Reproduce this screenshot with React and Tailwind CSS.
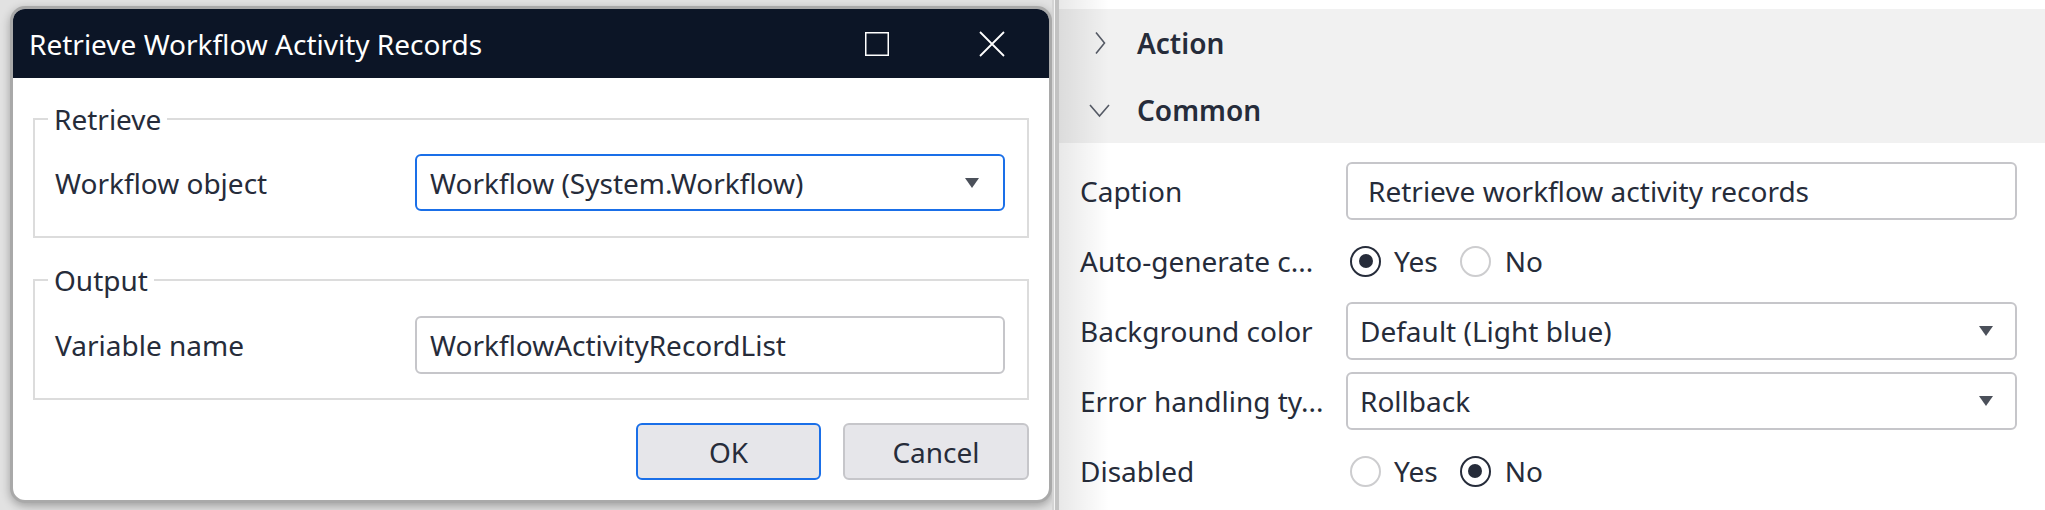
import React from "react";

function Triangle() {
  return (
    <svg width="14" height="10" viewBox="0 0 14 10" className="shrink-0">
      <polygon points="0,0 14,0 7,10" fill="#4b505a" />
    </svg>
  );
}

function Radio({ checked }) {
  return checked ? (
    <span className="w-[31px] h-[31px] rounded-full border-2 border-[#262c3a] flex items-center justify-center shrink-0">
      <span className="w-[14px] h-[14px] rounded-full bg-[#262c3a]" />
    </span>
  ) : (
    <span className="w-[31px] h-[31px] rounded-full border-2 border-[#cdcdcf] shrink-0" />
  );
}

function RadioPair({ yes }) {
  return (
    <div className="flex items-center pl-[4px]">
      <Radio checked={yes} />
      <span className="ml-[13px]">Yes</span>
      <span className="ml-[22px] flex items-center">
        <Radio checked={!yes} />
        <span className="ml-[14px]">No</span>
      </span>
    </div>
  );
}

function Dialog() {
  return (
    <div className="w-[1042px] h-[497px] border-[3px] border-[#a9a9a9] rounded-[15px] overflow-hidden bg-white flex flex-col shadow-[0_3px_10px_rgba(0,0,0,0.3)]">
      <div className="h-[69px] shrink-0 bg-[#0c1526] flex items-center pl-[16px] pr-[44px] text-white">
        <span className="flex-1">Retrieve Workflow Activity Records</span>
        <svg width="24" height="24" viewBox="0 0 24 24" className="shrink-0">
          <rect x="0.75" y="0.75" width="22.5" height="22.5" fill="none" stroke="#ffffff" strokeWidth="1.5" />
        </svg>
        <svg width="26" height="26" viewBox="0 0 26 26" className="ml-[90px] shrink-0">
          <path d="M1 1 L25 25 M25 1 L1 25" stroke="#ffffff" strokeWidth="1.8" fill="none" />
        </svg>
      </div>
      <div className="flex-1 flex flex-col px-[20px] pt-[22px] pb-[20px]">
        <fieldset className="border-2 border-[#dcdcdc]">
          <legend className="ml-[13px] px-[6px] leading-[38px]">Retrieve</legend>
          <div className="flex items-center pl-[20px] pr-[22px] pt-[16px] pb-[25px]">
            <span className="w-[360px] shrink-0">Workflow object</span>
            <div className="flex-1 h-[57px] border-2 border-[#1a6fe8] rounded-[6px] flex items-center pl-[13px] pr-[24px]">
              <span className="flex-1">Workflow (System.Workflow)</span>
              <Triangle />
            </div>
          </div>
        </fieldset>
        <fieldset className="border-2 border-[#dcdcdc] mt-[23px]">
          <legend className="ml-[13px] px-[6px] leading-[38px]">Output</legend>
          <div className="flex items-center pl-[20px] pr-[22px] pt-[17px] pb-[24px]">
            <span className="w-[360px] shrink-0">Variable name</span>
            <div className="flex-1 h-[58px] border-2 border-[#c6c6ca] rounded-[6px] flex items-center pl-[13px]">
              <span>WorkflowActivityRecordList</span>
            </div>
          </div>
        </fieldset>
        <div className="flex justify-end gap-[22px] mt-[23px]">
          <button className="w-[185px] h-[57px] bg-[#e6e6ea] border-2 border-[#1a6fe8] rounded-[6px] flex items-center justify-center">
            OK
          </button>
          <button className="w-[186px] h-[57px] bg-[#e6e6ea] border-2 border-[#c6c6ca] rounded-[6px] flex items-center justify-center">
            Cancel
          </button>
        </div>
      </div>
    </div>
  );
}

function Panel() {
  return (
    <div className="relative flex-1 h-full bg-white pt-[9px] flex flex-col">
      <div className="bg-[#f1f1f1] flex flex-col">
        <div className="h-[67px] flex items-center pl-[30px]">
          <svg width="24" height="24" viewBox="0 0 24 24" className="mr-[24px] shrink-0">
            <path d="M7 1.5 L15.5 12 L7 22.5" stroke="#565b66" strokeWidth="1.6" fill="none" />
          </svg>
          <span className="font-semibold">Action</span>
        </div>
        <div className="h-[67px] flex items-center pl-[30px]">
          <svg width="24" height="24" viewBox="0 0 24 24" className="mr-[24px] shrink-0">
            <path d="M1 7 L10.5 18 L20 7" stroke="#565b66" strokeWidth="1.6" fill="none" />
          </svg>
          <span className="font-semibold">Common</span>
        </div>
      </div>
      <div className="flex flex-col gap-[12px] pt-[19px] pl-[21px] pr-[28px]">
        <div className="h-[58px] flex items-center">
          <span className="w-[266px] shrink-0">Caption</span>
          <div className="flex-1 h-[58px] border-2 border-[#c6c6ca] rounded-[6px] flex items-center pl-[20px]">
            Retrieve workflow activity records
          </div>
        </div>
        <div className="h-[58px] flex items-center">
          <span className="w-[266px] shrink-0">Auto-generate c...</span>
          <RadioPair yes={true} />
        </div>
        <div className="h-[58px] flex items-center">
          <span className="w-[266px] shrink-0">Background color</span>
          <div className="flex-1 h-[58px] border-2 border-[#c6c6ca] rounded-[6px] flex items-center pl-[12px] pr-[22px]">
            <span className="flex-1">Default (Light blue)</span>
            <Triangle />
          </div>
        </div>
        <div className="h-[58px] flex items-center">
          <span className="w-[266px] shrink-0">Error handling ty...</span>
          <div className="flex-1 h-[58px] border-2 border-[#c6c6ca] rounded-[6px] flex items-center pl-[12px] pr-[22px]">
            <span className="flex-1">Rollback</span>
            <Triangle />
          </div>
        </div>
        <div className="h-[58px] flex items-center">
          <span className="w-[266px] shrink-0">Disabled</span>
          <RadioPair yes={false} />
        </div>
      </div>
      <div className="absolute left-0 top-0 bottom-0 w-[50px] pointer-events-none bg-[linear-gradient(to_right,rgba(0,0,0,0.09),rgba(0,0,0,0))]" />
    </div>
  );
}

export default function App() {
  return (
    <div className="flex w-[2045px] h-[510px] overflow-hidden font-['Noto_Sans','Open_Sans',sans-serif] text-[28px] text-[#262c3a]">
      <div className="w-[1052px] h-full shrink-0 bg-[#e2e2e2] pl-[10px] pt-[6px]">
        <Dialog />
      </div>
      <div className="flex shrink-0 h-full">
        <div className="w-[2px] bg-[#d4d4d4]" />
        <div className="w-[1px] bg-[#f4f4f4]" />
        <div className="w-[4px] bg-[#c2c2c2]" />
      </div>
      <Panel />
    </div>
  );
}
